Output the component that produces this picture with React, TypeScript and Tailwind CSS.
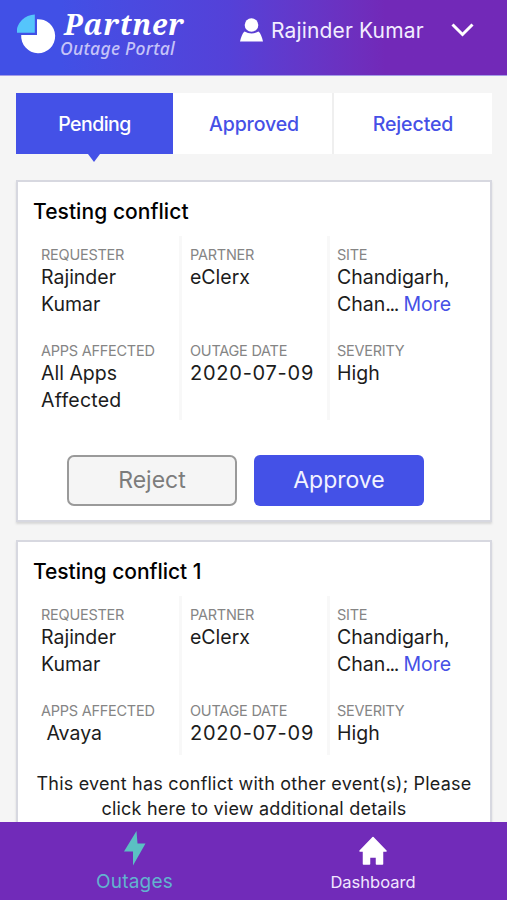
import type { ReactNode } from "react";

type Outage = {
  title: string;
  titleClass: string;
  apps: ReactNode;
  conflict?: boolean;
};

const outages: Outage[] = [
  {
    title: "Testing conflict",
    titleClass: "tracking-[0.06px]",
    apps: (
      <>
        All Apps
        <br />
        <span className="tracking-[0.25px]">Affected</span>
      </>
    ),
  },
  {
    title: "Testing conflict 1",
    titleClass: "tracking-[-0.03px]",
    apps: <>&nbsp;Avaya</>,
    conflict: true,
  },
];

function Field({ label, children }: { label: string; children: ReactNode }) {
  return (
    <div className="whitespace-nowrap">
      <p className="text-[14.5px] leading-[18px] tracking-[-0.25px] text-[#858585]">
        {label}
      </p>
      <div className="text-[19.5px] leading-[26.5px] text-[#1c1c1c]">{children}</div>
    </div>
  );
}

function Logo() {
  return (
    <div className="flex">
      <svg className="mt-[14px] shrink-0" width="39" height="40" viewBox="0 0 39 40">
        <path d="M20 5.200A17 17 0 1 1 4.200 21H20Z" fill="#fff" />
        <path d="M17.800 0.500V18.800H-.5A18.500 18.500 0 0 1 17.800 0.500Z" fill="#55c5fb" />
      </svg>
      <div className="ml-[4px] whitespace-nowrap italic">
        <p className="ml-[4px] mt-[9px] h-[30px] font-['Noto_Serif','DejaVu_Serif',serif] text-[28.5px] font-bold leading-[30px] tracking-[0.7px] text-white">
          Partner
        </p>
        <p className="h-[18px] font-['Noto_Sans',sans-serif] text-[17.5px] font-medium leading-[18px] tracking-[0.3px] text-[#c5c3f8]">
          Outage Portal
        </p>
      </div>
    </div>
  );
}

function Header() {
  return (
    <header className="flex h-[76px] shrink-0 border-b border-[#a49ce6] bg-linear-to-r from-[#4150e6] from-12% via-[#5441d8] via-45% to-[#7229b8] to-76% pl-[17px]">
      <div className="w-[223px]">
        <Logo />
      </div>
      <svg className="mt-[18px] shrink-0" width="23" height="24" viewBox="0 0 23 24">
        <circle cx="11.500" cy="7" r="6.800" fill="#fff" />
        <path d="M4.500 13.500Q11.500 17.500 18.500 13.500C20.500 15 22 19 23 23.500H0C1 19 2.500 15 4.500 13.500Z" fill="#fff" />
      </svg>
      <p className="ml-[8px] mt-[17px] w-[180px] whitespace-nowrap text-[21px] leading-[28px] tracking-[0.15px] text-[#f2edff]">
        Rajinder Kumar
      </p>
      <svg className="mt-[23px] shrink-0" width="24" height="14" viewBox="0 0 24 14">
        <path d="M1.500 1.500L11.500 11.500L21.500 1.500" fill="none" stroke="#fff" strokeWidth="3" />
      </svg>
    </header>
  );
}

function Tabs() {
  return (
    <nav className="grid h-[61px] shrink-0 grid-cols-[157px_161px_1fr] grid-rows-[61px] text-center text-[19.5px] font-medium leading-[63px] text-[#4650e6]">
      <div className="relative bg-[#4451e7] tracking-[-0.55px] text-white">
        Pending
        <span className="absolute left-[72px] top-[61px] h-[8px] w-[12px] bg-[#4451e7] [clip-path:polygon(0_0,100%_0,50%_100%)]" />
      </div>
      <div className="border-r-2 border-[#efefef] bg-white pl-[3px] tracking-[-0.1px]">
        Approved
      </div>
      <div className="bg-white tracking-[-0.1px]">Rejected</div>
    </nav>
  );
}

function OutageCard({ title, titleClass, apps, conflict }: Outage) {
  return (
    <section className="h-[342px] shrink-0 border-2 border-[#d7d8e0] bg-white shadow-[0_2px_2px_#d8d8d8]">
      <h2
        className={`ml-[15px] mt-[15px] text-[21px] font-medium leading-[30px] text-black ${titleClass}`}
      >
        {title}
      </h2>
      <div
        className={
          conflict
            ? "mt-[9px] grid h-[159px] grid-cols-[164px_148px_1fr]"
            : "mt-[9px] grid h-[184px] grid-cols-[164px_148px_1fr]"
        }
      >
        <div className="grid grid-rows-[96px_1fr] border-r-3 border-[#f8f8f8] pl-[23px] pt-[10px]">
          <Field label="REQUESTER">
            Rajinder
            <br />
            Kumar
          </Field>
          <Field label="APPS AFFECTED">{apps}</Field>
        </div>
        <div className="grid grid-rows-[96px_1fr] border-r-3 border-[#f8f8f8] pl-[8px] pt-[10px]">
          <Field label="PARTNER">eClerx</Field>
          <Field label="OUTAGE DATE">
            <span className="text-[20px] tracking-[0.750px]">2020-07-09</span>
          </Field>
        </div>
        <div className="grid grid-rows-[96px_1fr] pl-[7px] pt-[10px]">
          <Field label="SITE">
            Chandigarh,
            <br />
            Chan<span className="tracking-[-1.400px]">...</span>{" "}
            <a className="text-[#4650e6]">More</a>
          </Field>
          <Field label="SEVERITY">High</Field>
        </div>
      </div>
      {conflict ? (
        <p className="mt-[17px] whitespace-nowrap text-center text-[18px] leading-[24.500px] tracking-[0.22px] text-[#1c1c1c]">
          This event has conflict with other event(s); Please
          <br />
          click here to view additional details
        </p>
      ) : (
        <div className="ml-[49px] mt-[35px] flex gap-[17px] text-[23px]">
          <button className="h-[51px] w-[170px] rounded-[7px] border-2 border-[#9a9a9a] bg-[#f5f5f5] text-[#7c7c7c]">
            Reject
          </button>
          <button className="h-[51px] w-[170px] rounded-[6px] bg-[#4451e7] text-[#f2f2ff]">
            Approve
          </button>
        </div>
      )}
    </section>
  );
}

function BottomNav() {
  return (
    <footer className="flex h-[78px] shrink-0 bg-[#712bb9] text-center">
      <div className="flex w-[269px] flex-col items-center text-[19px] leading-[24px] tracking-[0.25px] text-[#62b3cf]">
        <svg className="mt-[9px]" width="22" height="35" viewBox="0 0 22 35">
          <path d="M12.500 0L0 20.500H9V34.500L21.500 12.500H13.500Z" fill="#5bc0c3" />
        </svg>
        <span className="mt-[4px]">Outages</span>
      </div>
      <div className="flex w-[208px] flex-col items-center text-[16.5px] leading-[22px] text-[#f1e6ff]">
        <svg className="mt-[14px]" width="28" height="29" viewBox="0 0 28 29">
          <path
            d="M14 1.500L27 15H23.500V28H17.500V21H10.500V28H4.500V15H1Z"
            fill="#fff"
            stroke="#fff"
            strokeWidth="1.500"
            strokeLinejoin="round"
          />
        </svg>
        <span className="mt-[6px]">Dashboard</span>
      </div>
    </footer>
  );
}

export default function App() {
  return (
    <div className="flex h-[900px] w-[507px] flex-col overflow-hidden bg-[#f5f5f5] font-['Inter',sans-serif]">
      <Header />
      <main className="flex h-[746px] flex-col overflow-hidden pl-[16px] pr-[15px] pt-[17px]">
        <Tabs />
        <div className="mt-[26px] flex flex-col gap-[18px]">
          {outages.map((outage) => (
            <OutageCard key={outage.title} {...outage} />
          ))}
        </div>
      </main>
      <BottomNav />
    </div>
  );
}
